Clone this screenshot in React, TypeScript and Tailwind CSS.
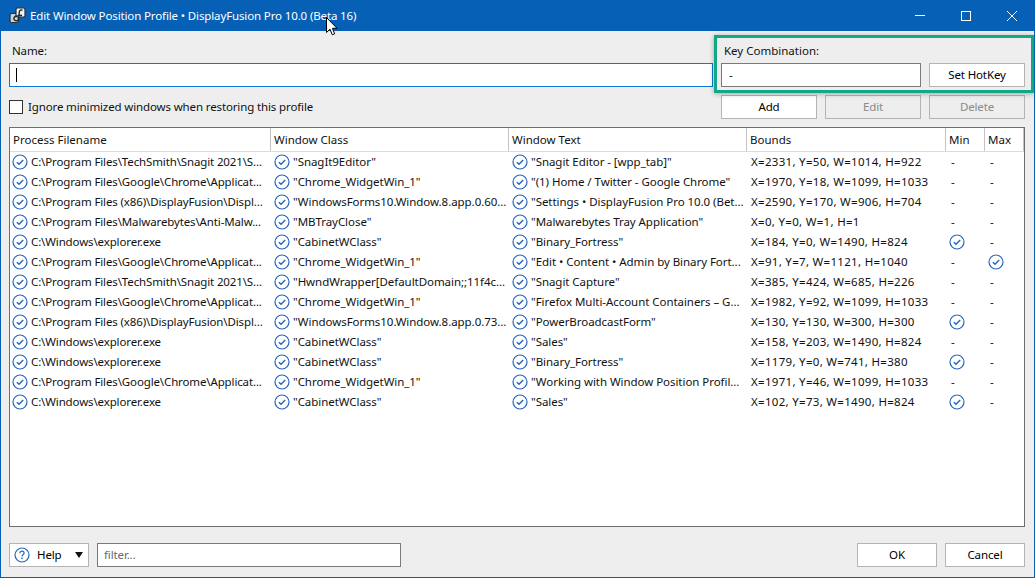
import React from 'react';

const blue = '#2766bd';

type Row = {
  file: string;
  cls: string;
  text: string;
  bounds: string;
  min?: boolean;
  max?: boolean;
};

const rows: Row[] = [
  { file: 'C:\\Program Files\\TechSmith\\Snagit 2021\\S...', cls: '"SnagIt9Editor"', text: '"Snagit Editor - [wpp_tab]"', bounds: 'X=2331, Y=50, W=1014, H=922' },
  { file: 'C:\\Program Files\\Google\\Chrome\\Applicat...', cls: '"Chrome_WidgetWin_1"', text: '"(1) Home / Twitter - Google Chrome"', bounds: 'X=1970, Y=18, W=1099, H=1033' },
  { file: 'C:\\Program Files (x86)\\DisplayFusion\\Displ...', cls: '"WindowsForms10.Window.8.app.0.60...', text: '"Settings • DisplayFusion Pro 10.0 (Bet...', bounds: 'X=2590, Y=170, W=906, H=704' },
  { file: 'C:\\Program Files\\Malwarebytes\\Anti-Malw...', cls: '"MBTrayClose"', text: '"Malwarebytes Tray Application"', bounds: 'X=0, Y=0, W=1, H=1' },
  { file: 'C:\\Windows\\explorer.exe', cls: '"CabinetWClass"', text: '"Binary_Fortress"', bounds: 'X=184, Y=0, W=1490, H=824', min: true },
  { file: 'C:\\Program Files\\Google\\Chrome\\Applicat...', cls: '"Chrome_WidgetWin_1"', text: '"Edit • Content • Admin by Binary Fort...', bounds: 'X=91, Y=7, W=1121, H=1040', max: true },
  { file: 'C:\\Program Files\\TechSmith\\Snagit 2021\\S...', cls: '"HwndWrapper[DefaultDomain;;11f4c...', text: '"Snagit Capture"', bounds: 'X=385, Y=424, W=685, H=226' },
  { file: 'C:\\Program Files\\Google\\Chrome\\Applicat...', cls: '"Chrome_WidgetWin_1"', text: '"Firefox Multi-Account Containers – G...', bounds: 'X=1982, Y=92, W=1099, H=1033' },
  { file: 'C:\\Program Files (x86)\\DisplayFusion\\Displ...', cls: '"WindowsForms10.Window.8.app.0.73...', text: '"PowerBroadcastForm"', bounds: 'X=130, Y=130, W=300, H=300', min: true },
  { file: 'C:\\Windows\\explorer.exe', cls: '"CabinetWClass"', text: '"Sales"', bounds: 'X=158, Y=203, W=1490, H=824' },
  { file: 'C:\\Windows\\explorer.exe', cls: '"CabinetWClass"', text: '"Binary_Fortress"', bounds: 'X=1179, Y=0, W=741, H=380', min: true },
  { file: 'C:\\Program Files\\Google\\Chrome\\Applicat...', cls: '"Chrome_WidgetWin_1"', text: '"Working with Window Position Profil...', bounds: 'X=1971, Y=46, W=1099, H=1033' },
  { file: 'C:\\Windows\\explorer.exe', cls: '"CabinetWClass"', text: '"Sales"', bounds: 'X=102, Y=73, W=1490, H=824', min: true },
];

const CheckIcon = () => (
  <svg width="16" height="16" viewBox="0 0 16 16" fill="none" className="shrink-0">
    <circle cx="8" cy="8" r="7" stroke={blue} strokeWidth="1.2" />
    <path d="M4.8 8.2 L7 10.3 L11.2 5.9" stroke={blue} strokeWidth="1.4" />
  </svg>
);

const Btn = ({ label, disabled, className }: { label: string; disabled?: boolean; className?: string }) => (
  <button
    className={`h-6 flex items-center justify-center border-[1.5px] border-[#b4b4b4] ${disabled ? 'bg-[#eeeeee] text-[#8a8a8a]' : 'bg-white text-black'} ${className ?? 'w-24'}`}
  >
    {label}
  </button>
);

const columns = 'grid grid-cols-[261px_238px_238px_199px_39px_39px]';

export default function App() {
  return (
    <div className="w-[1035px] h-[578px] flex flex-col bg-[#eeeeee] border-x border-b border-[#0560b6] text-[11.5px] tracking-[-0.13px] leading-4 text-[#111111] overflow-hidden relative font-['Noto_Sans',sans-serif]">
      {/* Title bar */}
      <div className="h-[31px] shrink-0 -mx-px bg-[#0560b6] flex items-center text-white">
        <svg width="17" height="17" viewBox="0 0 17 17" fill="none" className="ml-[9px] mr-[4px]">
          <rect x="1" y="6.5" width="8.5" height="9" rx="1.5" fill="#c9d2d9" stroke="#26323c" strokeWidth="1.2" />
          <rect x="7" y="1" width="9" height="9" rx="1.5" fill="#eef2f5" stroke="#26323c" strokeWidth="1.2" />
          <path d="M13.5 3.2 C11 2.4 10.3 4 10.2 6 L9.6 11.5 C9.4 14 7.5 14.4 5.6 13.2 C3.8 11.8 5.2 9.2 8 9 L13 8.2" stroke="#1c2730" strokeWidth="1.4" />
        </svg>
        <span>Edit Window Position Profile • DisplayFusion Pro 10.0 (Beta 16)</span>
        <div className="ml-auto flex h-full">
          <div className="w-[46px] flex items-center justify-center">
            <div className="w-[10px] h-px bg-white" />
          </div>
          <div className="w-[46px] flex items-center justify-center">
            <div className="w-[10px] h-[10px] border border-white" />
          </div>
          <div className="w-[46px] flex items-center justify-center">
            <svg width="10" height="10" viewBox="0 0 10 10" stroke="white" strokeWidth="1">
              <path d="M0 0 L10 10 M10 0 L0 10" />
            </svg>
          </div>
        </div>
      </div>

      {/* Body */}
      <div className="flex-1 flex flex-col pt-[12px] pl-2 pr-[9px]">
        <div className="flex gap-2">
          <div className="flex-1 flex flex-col gap-1">
            <div className="pl-[3px]">Name:</div>
            <div className="h-6 bg-white border border-[#0a78d4] flex items-center pl-[6px]">
              <div className="w-px h-[14px] bg-black" />
            </div>
          </div>
          <div className="w-[304px] flex flex-col gap-1">
            <div className="pl-[3px] tracking-normal">Key Combination:</div>
            <div className="flex gap-2">
              <div className="w-[200px] h-6 bg-white border border-[#7a7a7a] flex items-center pl-[7px]">-</div>
              <Btn label="Set HotKey" />
            </div>
          </div>
        </div>

        <div className="flex items-center mt-2 h-6">
          <div className="w-[14px] h-[14px] bg-white border border-[#333333] mr-[5px]" />
          <span>Ignore minimized windows when restoring this profile</span>
          <div className="ml-auto flex gap-2">
            <Btn label="Add" />
            <Btn label="Edit" disabled />
            <Btn label="Delete" disabled />
          </div>
        </div>

        {/* Process list */}
        <div className="mt-2 h-[400px] shrink-0 bg-white border border-[#6e6e6e] overflow-hidden">
          <div className={`${columns} h-6 border-b border-[#dcdcdc] tracking-normal`}>
            {['Process Filename', 'Window Class', 'Window Text', 'Bounds', 'Min', 'Max'].map((h) => (
              <div key={h} className="flex items-center pl-[3px] pt-px border-r border-[#c4c4c4]">
                {h}
              </div>
            ))}
          </div>
          {rows.map((r, i) => (
            <div key={i} className={`${columns} h-5 whitespace-nowrap`}>
              <div className="flex items-center gap-[3px] pl-[2px]"><CheckIcon />{r.file}</div>
              <div className="flex items-center gap-[3px] pl-[3px] tracking-[-0.05px]"><CheckIcon />{r.cls}</div>
              <div className="flex items-center gap-[3px] pl-[3px] tracking-[-0.05px]"><CheckIcon />{r.text}</div>
              <div className="flex items-center pl-[4px] tracking-[0.3px]">{r.bounds}</div>
              <div className="flex items-center pl-[3px]">{r.min ? <CheckIcon /> : <span className="pl-[2px]">-</span>}</div>
              <div className="flex items-center pl-[3px]">{r.max ? <CheckIcon /> : <span className="pl-[2px]">-</span>}</div>
            </div>
          ))}
        </div>

        {/* Footer */}
        <div className="mt-4 flex items-center gap-2">
          <button className="w-20 h-6 bg-white border-[1.5px] border-[#b4b4b4] flex items-center pl-[4px] text-black">
            <svg width="16" height="16" viewBox="0 0 16 16" fill="none">
              <circle cx="8" cy="8" r="7" stroke={blue} strokeWidth="1.2" />
              <path d="M5.9 6.2 C5.9 4.9 6.9 4.2 8 4.2 C9.2 4.2 10.1 5 10.1 6.1 C10.1 7.5 8 7.6 8 9.4" stroke={blue} strokeWidth="1.2" />
              <circle cx="8" cy="11.4" r="0.8" fill={blue} />
            </svg>
            <span className="ml-[7px]">Help</span>
            <svg width="8" height="6" viewBox="0 0 8 6" className="ml-[13px]">
              <path d="M0 0 H8 L4 6 Z" fill="#111111" />
            </svg>
          </button>
          <div className="w-[304px] h-6 bg-white border border-[#7a7a7a] flex items-center pl-[6px] text-[#6a6a6a]">filter...</div>
          <div className="ml-auto flex gap-2">
            <Btn label="OK" className="w-20" />
            <Btn label="Cancel" className="w-20" />
          </div>
        </div>
      </div>

      {/* Callout drawn over the screenshot */}
      <div className="absolute left-[713px] top-[35px] w-[320px] h-[58px] border-[3px] border-[#12a886] shadow-[0_1px_5px_rgba(0,0,0,0.3)] pointer-events-none" />

      {/* Mouse cursor */}
      <svg width="12" height="19" viewBox="0 0 12 19" className="absolute left-[325px] top-[17px] pointer-events-none">
        <path d="M0.5 0.5 V15.5 L4 12.2 L6.3 17.8 L8.7 16.8 L6.4 11.3 H11 Z" fill="white" stroke="black" strokeWidth="1" />
      </svg>
    </div>
  );
}
